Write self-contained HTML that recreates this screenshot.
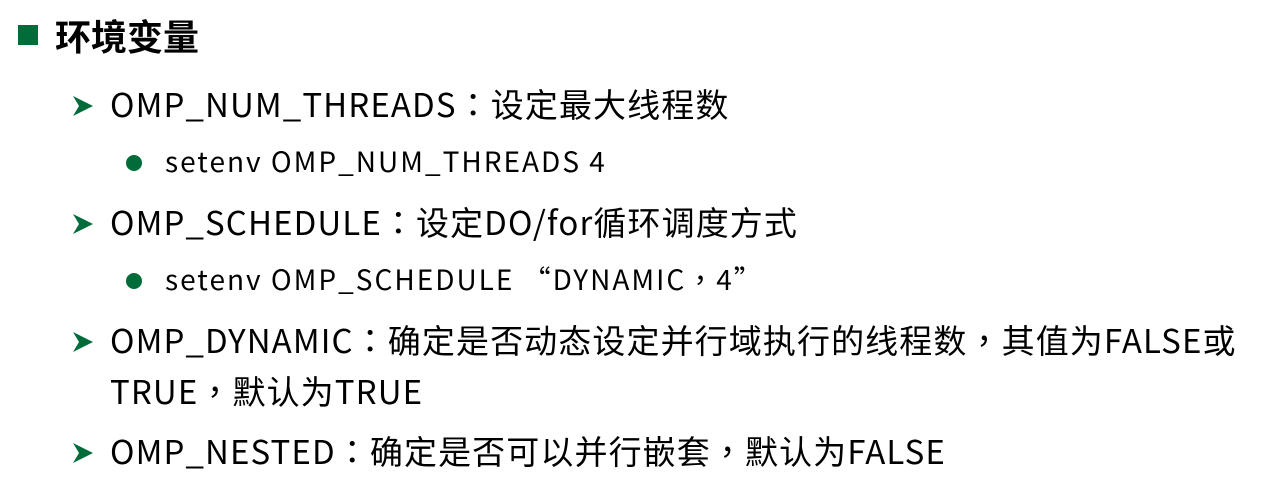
<!DOCTYPE html>
<html><head><meta charset="utf-8"><style>
body{margin:0;width:1270px;height:487px;background:#fff;position:relative;overflow:hidden;font-family:"Noto Sans CJK SC","Liberation Sans",sans-serif;color:#000}
.a{position:absolute;white-space:nowrap;line-height:1}
.t{font-size:36px;font-weight:bold;left:55px;top:17px}
.l1{font-size:33px;left:110px;letter-spacing:1.1px}
.l2{font-size:28px;left:165px;letter-spacing:2px}
.p{font-family:"Noto Sans CJK TC",sans-serif}
.sq{position:absolute;left:18px;top:25px;width:20px;height:20px;background:#006c3a}
.dot{position:absolute;left:126px;width:16px;height:16px;border-radius:50%;background:#006c3a}
svg{position:absolute;left:73px}
</style></head><body>
<div class="sq"></div>
<div class="a t">环境变量</div>

<svg width="20" height="20" style="top:96px" viewBox="0 0 20 20"><path d="M0 0 L20 10 L0 20 L6 10 Z" fill="#006c3a"/></svg>
<div class="a l1" style="top:87px">OMP_NUM_THREADS<span class="p">：</span>设定最大线程数</div>
<div class="dot" style="top:155px"></div>
<div class="a l2" style="top:147px">setenv OMP_NUM_THREADS 4</div>

<svg width="20" height="20" style="top:214px" viewBox="0 0 20 20"><path d="M0 0 L20 10 L0 20 L6 10 Z" fill="#006c3a"/></svg>
<div class="a l1" style="top:205px">OMP_SCHEDULE<span class="p">：</span>设定DO/for循环调度方式</div>
<div class="dot" style="top:273px"></div>
<div class="a l2" style="top:265px">setenv OMP_SCHEDULE “DYNAMIC<span class="p">，</span>4”</div>

<svg width="20" height="20" style="top:332px" viewBox="0 0 20 20"><path d="M0 0 L20 10 L0 20 L6 10 Z" fill="#006c3a"/></svg>
<div class="a l1" style="top:323px">OMP_DYNAMIC<span class="p">：</span>确定是否动态设定并行域执行的线程数<span class="p">，</span>其值为FALSE或</div>
<div class="a l1" style="top:374px">TRUE<span class="p">，</span>默认为TRUE</div>

<svg width="20" height="20" style="top:443px" viewBox="0 0 20 20"><path d="M0 0 L20 10 L0 20 L6 10 Z" fill="#006c3a"/></svg>
<div class="a l1" style="top:434px">OMP_NESTED<span class="p">：</span>确定是否可以并行嵌套<span class="p">，</span>默认为FALSE</div>
</body></html>
